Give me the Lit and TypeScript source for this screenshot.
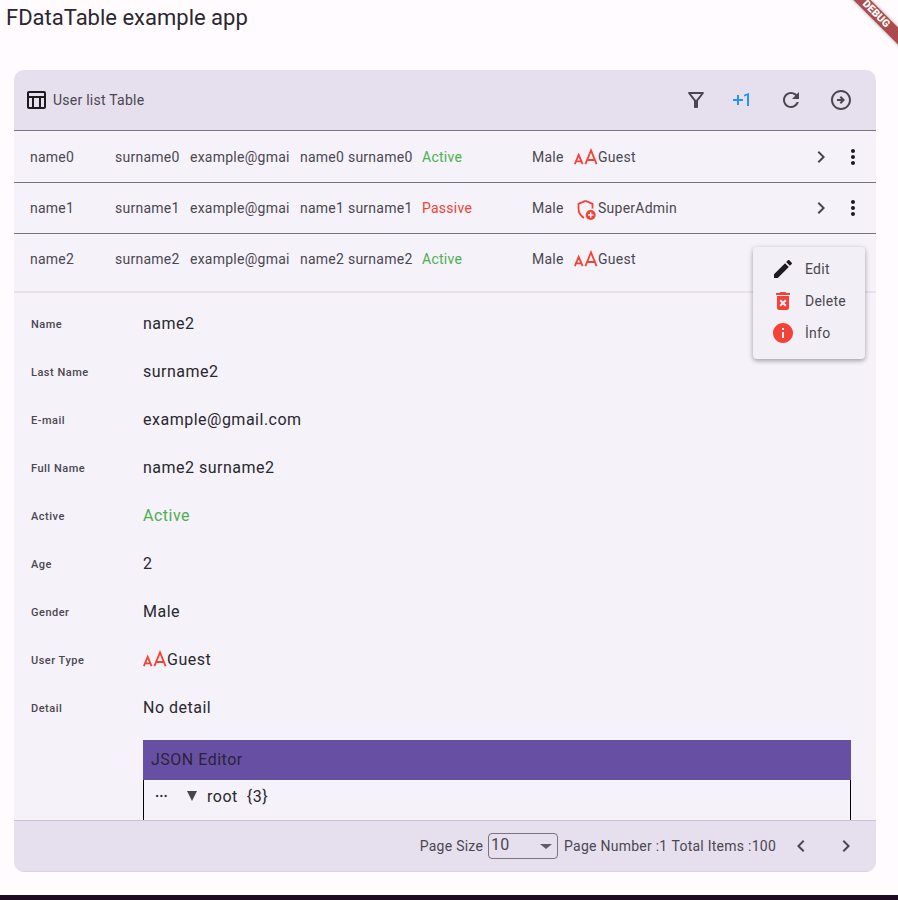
import { LitElement, html, css } from "lit";
import { customElement } from "lit/decorators.js";

const P = {
  table: "M20 3H5C3.9 3 3 3.9 3 5v14c0 1.1.9 2 2 2h15c1.1 0 2-.9 2-2V5c0-1.1-.9-2-2-2zm0 2v3H5V5h15zm-5 14h-5v-9h5v9zM5 10h3v9H5v-9zm12 9v-9h3v9h-3z",
  filter: "M7 6h10l-5.01 6.3L7 6zm-2.75-.39C6.27 8.2 10 13 10 13v6c0 .55.45 1 1 1h2c.55 0 1-.45 1-1v-6s3.72-4.8 5.74-7.39c.51-.66.04-1.61-.79-1.61H5.04c-.83 0-1.3.95-.79 1.61z",
  plus1: "M10 7H8v4H4v2h4v4h2v-4h4v-2h-4V7zm10 11h-2V7.38L15 8.4V6.7L19.7 5h.3v13z",
  refresh: "M17.65 6.35C16.2 4.9 14.21 4 12 4c-4.42 0-7.99 3.58-7.99 8s3.57 8 7.99 8c3.73 0 6.84-2.55 7.73-6h-2.08c-.82 2.33-3.04 4-5.65 4-3.31 0-6-2.69-6-6s2.69-6 6-6c1.66 0 3.14.69 4.22 1.78L13 11h7V4l-2.35 2.35z",
  go: "M22 12c0-5.52-4.48-10-10-10S2 6.48 2 12s4.48 10 10 10 10-4.48 10-10zM4 12c0-4.42 3.58-8 8-8s8 3.58 8 8-3.58 8-8 8-8-3.58-8-8zm12 0-4 4-1.41-1.41L12.17 13H8v-2h4.17l-1.59-1.59L12 8l4 4z",
  right: "M10 6 8.59 7.41 13.17 12l-4.58 4.59L10 18l6-6z",
  left: "M15.41 7.41 14 6l-6 6 6 6 1.41-1.41L10.83 12z",
  more: "M12 8c1.1 0 2-.9 2-2s-.9-2-2-2-2 .9-2 2 .9 2 2 2zm0 2c-1.1 0-2 .9-2 2s.9 2 2 2 2-.9 2-2-.9-2-2-2zm0 6c-1.1 0-2 .9-2 2s.9 2 2 2 2-.9 2-2-.9-2-2-2z",
  edit: "M3 17.25V21h3.75L17.81 9.94l-3.75-3.75L3 17.25zM20.71 7.04c.39-.39.39-1.02 0-1.41l-2.34-2.34c-.39-.39-1.02-.39-1.41 0l-1.83 1.83 3.75 3.75 1.83-1.83z",
  del: "M6 19c0 1.1.9 2 2 2h8c1.1 0 2-.9 2-2V7H6v12zm2.46-7.12 1.41-1.41L12 12.59l2.12-2.12 1.41 1.41L13.41 14l2.12 2.12-1.41 1.41L12 15.41l-2.12 2.12-1.41-1.41L10.59 14l-2.13-2.12zM15.5 4l-1-1h-5l-1 1H5v2h14V4z",
  info: "M12 2C6.48 2 2 6.48 2 12s4.48 10 10 10 10-4.48 10-10S17.52 2 12 2zm1 15h-2v-6h2v6zm0-8h-2V7h2v2z",
};

const icon = (d: string, cls = "") =>
  html`<svg class="icon ${cls}" viewBox="0 0 24 24"><path d=${d}></path></svg>`;

const guestIcon = html`<svg class="icon type" viewBox="0 0 24 24">
  <path class="line" d="M.8 19.2 4.7 9.8 8.6 19.2M2 16.4h5.4M11.4 19.2 17 5.4 22.6 19.2M13.2 15h7.6"></path>
</svg>`;

const adminIcon = html`<svg class="icon type" viewBox="0 0 24 24">
  <path class="line" d="M11.5 4.8 4.5 7.8v5c0 3.5 1.6 6.6 5.5 9.2M11.5 4.8 18.5 7.8v4.6"></path>
  <circle class="fill" cx="16.7" cy="19" r="5"></circle>
  <path class="plus" d="M16.7 16.3v5.4M14 19h5.4"></path>
</svg>`;

const rows = [
  { n: "name0", s: "surname0", active: true, admin: false, open: false },
  { n: "name1", s: "surname1", active: false, admin: true, open: false },
  { n: "name2", s: "surname2", active: true, admin: false, open: true },
];

const details: [string, unknown, string?][] = [
  ["Name", "name2"],
  ["Last Name", "surname2"],
  ["E-mail", "example@gmail.com"],
  ["Full Name", "name2 surname2"],
  ["Active", "Active", "ok"],
  ["Age", "2"],
  ["Gender", "Male"],
  ["User Type", html`<span class="typecell">${guestIcon}<span>Guest</span></span>`],
  ["Detail", "No detail"],
];

@customElement("app-root")
export class AppRoot extends LitElement {
  static styles = css`
    :host {
      display: flex;
      flex-direction: column;
      position: relative;
      height: 900px;
      overflow: hidden;
      background: #fffbff;
      font-family: Roboto, "Liberation Sans", sans-serif;
      color: #4b4751;
      font-size: 14px;
      letter-spacing: 0.25px;
    }
    .icon { width: 24px; height: 24px; fill: currentColor; flex: none; display: block; }
    .line { fill: none; stroke: #f44336; stroke-width: 1.8; }
    .fill { fill: #f44336; }
    .plus { fill: none; stroke: #f5f2f9; stroke-width: 1.5; }
    .appbar {
      font-size: 22px; line-height: 36px; letter-spacing: 0; color: #2a282e;
      padding-left: 6px; margin-bottom: 34px;
    }
    .card {
      display: flex; flex-direction: column;
      width: 862px; height: 802px; margin-left: 14px;
      border-radius: 10px; overflow: hidden; background: #f5f2f9;
    }
    .head {
      display: flex; align-items: center; flex: none;
      height: 60px; padding-left: 10px; padding-right: 23px;
      background: #e5dfee; border-bottom: 1px solid #79747e;
    }
    .head .title { margin-left: 5px; flex: 1; }
    .head .table { color: #1d1b20; }
    .tools { display: flex; gap: 26px; }
    .tools .funnel { margin-right: -5px; }
    .blue { color: #2196f3; }
    .body { flex: 1; min-height: 0; overflow: hidden; }
    .row {
      display: grid;
      grid-template-columns: 85px 75px 110px 122px 110px 42px 1fr 32px 32px;
      align-items: center;
      height: 50px; padding-left: 16px; padding-right: 7px;
      border-bottom: 1px solid #79747e;
    }
    .row:first-child { height: 51px; }
    .row.open { padding-bottom: 7px; border-bottom: 2px solid #e6e1ea; }
    .clip { overflow: hidden; white-space: nowrap; }
    .ok { color: #4caf50; }
    .bad { color: #f44336; }
    .typecell { display: flex; align-items: center; }
    .nav { justify-self: center; color: #1d1b20; }
    .nav.soft { color: #49454f; }
    .det {
      display: grid; grid-template-columns: 112px 1fr; align-items: center;
      height: 48px; padding-left: 17px;
      font-size: 16px; letter-spacing: 0.5px; color: #2a282e;
    }
    .det .v { padding-bottom: 2px; }
    .dets { padding-top: 7px; }
    .det .k { font-size: 11px; font-weight: 500; color: #4b4751; letter-spacing: 0.5px; }
    .det .ok { color: #4caf50; }
    .json { margin: 8px 25px 0 129px; font-size: 16px; letter-spacing: 0.5px; color: #2a282e; }
    .jhead { height: 40px; line-height: 40px; padding-left: 8px; background: #6750a4; color: #2a2338; }
    .jbody {
      display: flex; align-items: center; height: 60px; padding-bottom: 28px; box-sizing: border-box;
      border-left: 1px solid #000; border-right: 1px solid #000;
    }
    .dots { font-size: 14px; font-weight: 700; margin-left: 11px; width: 32px; letter-spacing: 0; }
    .tri { width: 0; height: 0; border-left: 5px solid transparent; border-right: 5px solid transparent; border-top: 10px solid #49454f; margin-right: 10px; }
    .jbody .cnt { margin-left: 9px; }
    .foot {
      display: flex; align-items: center; justify-content: flex-end; flex: none;
      height: 50px; padding-right: 18px;
      background: #e5dfee; border-top: 1px solid #cac4d0; border-bottom: 1px solid #d8d3de;
    }
    .sel {
      display: flex; align-items: center; justify-content: space-between; box-sizing: border-box;
      width: 70px; height: 26px; margin: 0 6px 0 5px; padding: 0 0 2px 2px;
      border: 1px solid #79747e; border-radius: 4px; font-size: 16px; letter-spacing: 0.25px; line-height: 20px;
    }
    .sel i { width: 0; height: 0; margin: 2px 5px 0 0; border-left: 6px solid transparent; border-right: 6px solid transparent; border-top: 5px solid #615d67; }
    .foot .total { margin-left: 4px; }
    .foot .prev { margin-left: 13px; }
    .foot .next { margin-left: 21px; }
    .popup {
      position: absolute; left: 753px; top: 247px; width: 112px; height: 112px; box-sizing: border-box;
      padding: 6px 0; border-radius: 4px; background: #f3eff7;
      box-shadow: 0 2px 4px rgba(0,0,0,.25), 0 1px 6px rgba(0,0,0,.12);
    }
    .mi { display: flex; align-items: center; height: 32px; padding-left: 18px; gap: 10px; }
    .mi .icon { color: #1d1b20; }
    .mi .icon.red { color: #f44336; }
    .banner {
      position: absolute; left: 815.5px; top: 7.5px; width: 120px; height: 12px;
      transform: rotate(45deg);
      background: #ad4a4d; color: #fff; text-align: center;
      font-size: 10.5px; font-weight: 900; line-height: 12px; letter-spacing: 0;
      box-shadow: 0 0 4px rgba(0,0,0,.35);
    }
    .bar { margin-top: auto; height: 5px; background: #1f0a23; flex: none; }
  `;

  renderRow(r: (typeof rows)[number]) {
    return html`<div class="row ${r.open ? "open" : ""}">
      <span>${r.n}</span>
      <span>${r.s}</span>
      <span class="clip">example@gmai</span>
      <span class="clip">${r.n} ${r.s}</span>
      <span class=${r.active ? "ok" : "bad"}>${r.active ? "Active" : "Passive"}</span>
      <span>Male</span>
      <span class="typecell">${r.admin ? adminIcon : guestIcon}<span>${r.admin ? "SuperAdmin" : "Guest"}</span></span>
      ${icon(P.right, "nav soft")}
      ${icon(P.more, "nav")}
    </div>`;
  }

  render() {
    return html`
      <div class="appbar">FDataTable example app</div>
      <section class="card">
        <header class="head">
          ${icon(P.table, "table")}
          <span class="title">User list Table</span>
          <div class="tools">
            ${icon(P.filter, "funnel")}
            ${icon(P.plus1, "blue")}
            ${icon(P.refresh)}
            ${icon(P.go)}
          </div>
        </header>
        <div class="body">
          ${rows.map((r) => this.renderRow(r))}
          <div class="dets">
            ${details.map(
              ([k, v, c]) => html`<div class="det"><span class="k">${k}</span><span class="v ${c ?? ""}">${v}</span></div>`
            )}
          </div>
          <div class="json">
            <div class="jhead">JSON Editor</div>
            <div class="jbody">
              <span class="dots">···</span>
              <span class="tri"></span>
              <span>root</span>
              <span class="cnt">{3}</span>
            </div>
          </div>
        </div>
        <footer class="foot">
          <span>Page Size</span>
          <div class="sel"><span>10</span><i></i></div>
          <span>Page Number :1</span>
          <span class="total">Total Items :100</span>
          ${icon(P.left, "prev")}
          ${icon(P.right, "next")}
        </footer>
      </section>
      <div class="bar"></div>
      <div class="popup">
        <div class="mi">${icon(P.edit)}<span>Edit</span></div>
        <div class="mi">${icon(P.del, "red")}<span>Delete</span></div>
        <div class="mi">${icon(P.info, "red")}<span>İnfo</span></div>
      </div>
      <div class="banner">DEBUG</div>
    `;
  }
}
